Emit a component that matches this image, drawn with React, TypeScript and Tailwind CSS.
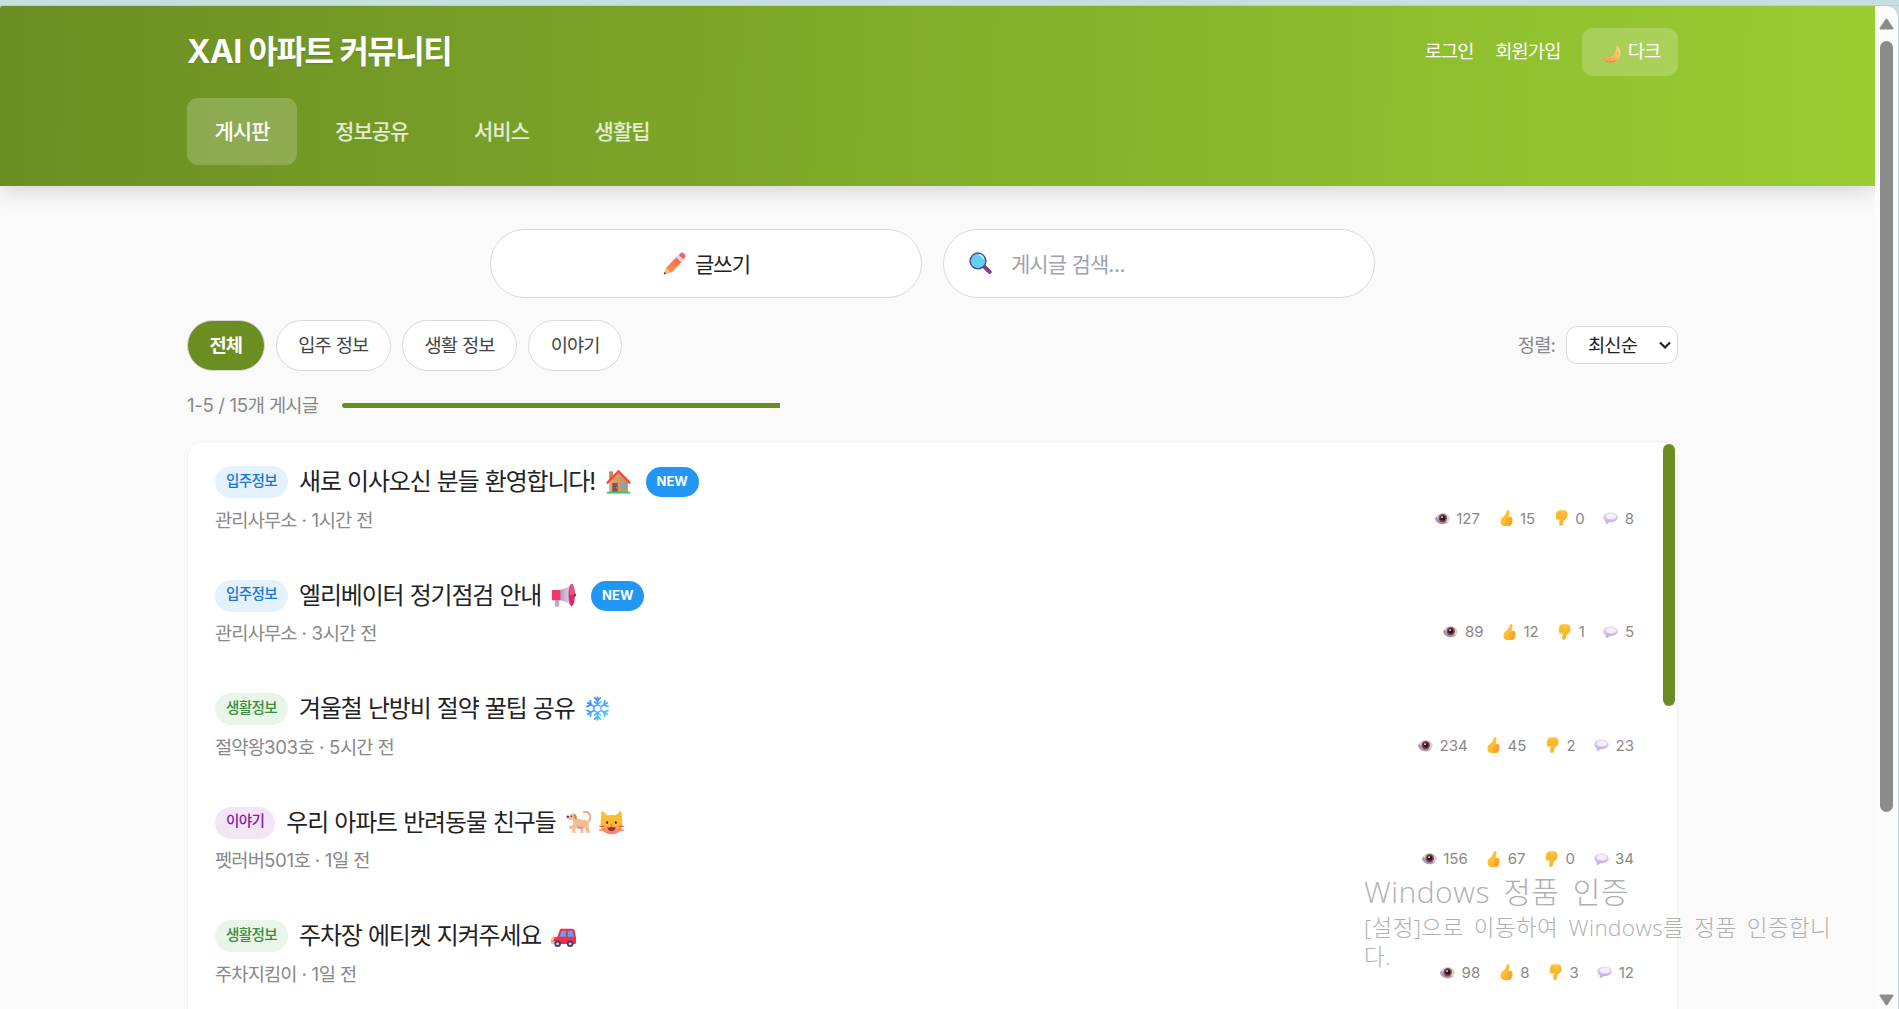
import type { ReactNode } from "react";

type IconProps = { className?: string };

function Svg({ className, viewBox = "0 0 32 32", children }: { className?: string; viewBox?: string; children: ReactNode }) {
  return (
    <svg viewBox={viewBox} className={className} fill="none" preserveAspectRatio="none" aria-hidden="true">
      {children}
    </svg>
  );
}

function Gradients() {
  return (
    <svg className="h-0 w-0 shrink-0" aria-hidden="true">
      <defs>
        <linearGradient id="thumb" x1="0" y1="0" x2="1" y2="1">
          <stop offset="0" stopColor="#ffd640" />
          <stop offset="1" stopColor="#f8a224" />
        </linearGradient>
        <linearGradient id="moon" x1="1" y1="0" x2="0" y2="1">
          <stop offset="0" stopColor="#ffd77a" />
          <stop offset="1" stopColor="#ff9c4a" />
        </linearGradient>
        <linearGradient id="pencil" x1="1" y1="0" x2="0" y2="1">
          <stop offset="0" stopColor="#f4604e" />
          <stop offset="1" stopColor="#ff9a3c" />
        </linearGradient>
        <linearGradient id="bubble" x1="0" y1="0" x2="0" y2="1">
          <stop offset="0" stopColor="#e9e1f3" />
          <stop offset="1" stopColor="#c0a9e0" />
        </linearGradient>
        <linearGradient id="horn" x1="0" y1="0" x2="1" y2="0">
          <stop offset="0" stopColor="#a79fc0" />
          <stop offset="1" stopColor="#dcd6e6" />
        </linearGradient>
        <linearGradient id="snow" x1="0" y1="0" x2="1" y2="1">
          <stop offset="0" stopColor="#3f86f2" />
          <stop offset="1" stopColor="#4fd0fb" />
        </linearGradient>
        <linearGradient id="cat" x1="0" y1="0" x2="0" y2="1">
          <stop offset="0" stopColor="#ffc330" />
          <stop offset="0.6" stopColor="#ffb53c" />
          <stop offset="1" stopColor="#ff6f70" />
        </linearGradient>
        <linearGradient id="wall" x1="0" y1="0" x2="1" y2="0">
          <stop offset="0" stopColor="#e3a878" />
          <stop offset="1" stopColor="#c98a5c" />
        </linearGradient>
      </defs>
    </svg>
  );
}

const Moon = ({ className }: IconProps) => (
  <Svg className={className}>
    <path d="M24 0c7 5 9.500 15 5 22.500C23.500 31.500 11 34 3 27.500 1 26 0 24 0 22c8 2.500 17-.5 21-8 2.700-5 3.500-9.500 3-14Z" fill="url(#moon)" />
    <path d="M2 26.500c.8 1.300 1.700 2.200 3 2.800 7 3.500 16 1.500 21-4-6 3.500-16 5.500-24 1.200Z" fill="#e87a5c" />
    <circle cx="12" cy="25" r="1.500" fill="#ee8a4c" />
    <circle cx="26" cy="14" r="1.500" fill="#f3ac55" />
  </Svg>
);

const Pencil = ({ className }: IconProps) => (
  <Svg className={className}>
    <path d="M5 21 20 6l7 7-15 15-10 3Z" fill="url(#pencil)" />
    <path d="m18.500 7.500 4-4 7 7-4 4Z" fill="#dcd9ee" />
    <path d="m22 4 2.500-2.500c1-1 3-1 4 0l2 2c1 1 1 3 0 4L28 10Z" fill="#ff5d5a" />
    <path d="m4.500 21.500-3.500 9c2 1 5 0 9-2Z" fill="#f0b9a0" />
    <path d="M1.800 27.500 1 30.500c1 .6 2.500.3 3.600-.3Z" fill="#50415a" />
  </Svg>
);

const Magnifier = ({ className }: IconProps) => (
  <Svg className={className}>
    <path d="m20 20 3-2 8 8c1 1 .8 2.500-.3 3.800-1.200 1.200-2.800 1.200-3.800.2l-8-8Z" fill="#7d4484" />
    <circle cx="12.500" cy="12.500" r="11" fill="#62d0f0" stroke="#53479c" strokeWidth="2" />
    <path d="M15 4.500c2.500.5 4.300 2.200 5 4.500" stroke="#b5f2ff" strokeWidth="2.500" strokeLinecap="round" />
  </Svg>
);

const House = ({ className }: IconProps) => (
  <Svg className={className}>
    <path d="M4 3h5v12H4Z" fill="#c8875c" />
    <path d="M16 4 28 17v13H4V17Z" fill="url(#wall)" />
    <path d="M8 18h7v12H8Z" fill="#86504f" />
    <circle cx="13.300" cy="24" r=".8" fill="#f2c28f" />
    <path d="M19 18h6.500v6.500H19Z" fill="#4bb6ef" />
    <path d="M2 17.500 16 3l14 14.500" stroke="#ee4b43" strokeWidth="3" strokeLinecap="round" strokeLinejoin="round" />
    <path d="M1 29h30v2.500H1Z" fill="#34cf6c" />
  </Svg>
);

const Megaphone = ({ className }: IconProps) => (
  <Svg className={className}>
    <path d="M5 20h5.500v10.500H7c-1.200 0-2-.8-2-2Z" fill="#b8aec9" />
    <path d="M11 9C17 8 22 5 25 2v27c-3-4-8-6-14-7Z" fill="url(#horn)" />
    <path d="M1 11c0-1.300.7-2 2-2h9v13H3c-1.300 0-2-.7-2-2Z" fill="#f0386a" />
    <ellipse cx="26.500" cy="15.500" rx="4" ry="14.500" fill="#e3275f" />
    <path d="M26 1c3 2 4 8 4 14h-6C24 8 25 3 26 1Z" fill="#f9507c" />
    <path d="M29.500 13c2 0 2.500 1.200 2.500 2.500s-.5 2.500-2.500 2.500Z" fill="#6e3350" />
  </Svg>
);

const Snowflake = ({ className }: IconProps) => (
  <Svg className={className}>
    <g stroke="url(#snow)" strokeWidth="2.300" strokeLinecap="round" strokeLinejoin="round">
      <path d="M16 1.500v8M16 22.500v8M12.500 2.500 16 6.500l3.500-4M12.500 29.500l3.500-4 3.500 4" />
      <path d="m3.400 8.800 7 4M21.600 19.200l7 4M2.500 13.500l5.200-2-1-5.400M29.500 18.500l-5.200 2 1 5.400" />
      <path d="m28.600 8.800-7 4M10.400 19.200l-7 4M29.500 13.500l-5.200-2 1-5.400M2.500 18.500l5.200 2-1 5.400" />
      <path d="m16 11 4.500 2.600v5L16 21.200l-4.500-2.600v-5ZM12 7.500l4 3 4-3M12 24.500l4-3 4 3" strokeWidth="1.800" />
    </g>
  </Svg>
);

const Dog = ({ className }: IconProps) => (
  <Svg className={className}>
    <path d="M26 16c4-1 5.500-4 5-8-.5-4.500-5-7-8-5" stroke="#e9ac84" strokeWidth="2.500" strokeLinecap="round" />
    <path d="M5 7C6 4.500 9 4 11.500 5c2 1 2 3.500 2.500 6 3 2 9 1 12.500 2.500 3 1.500 3 5 2.500 8l1.500 8h-4L24 23l-2 1 .5 5.500H19L18 23h-4l-3 2 1.500 4.500H9L7 24H4v-3l5-2V13c-2 0-5 0-7-2-2-1.500-1-3 0-3Z" fill="#f3bd96" />
    <path d="M14 21h8l-.5 3H15Z" fill="#ef8e91" />
    <path d="M10 5c3 0 4.500 4 3 7-2-1-3-3-3-7Z" fill="#c98460" />
    <circle cx="2.200" cy="8.500" r="1.500" fill="#473741" />
    <circle cx="7" cy="8" r="1" fill="#473741" />
  </Svg>
);

const Cat = ({ className }: IconProps) => (
  <Svg className={className}>
    <path d="M3 3c0-1.500 1.500-2 2.500-1L11 7c3-.7 7-.7 10 0l5.500-5c1-1 2.500-.5 2.500 1l1 15c.5 8-6 13-14 13S1.500 26 2 18Z" fill="url(#cat)" />
    <path d="M1 21h5M1 26l5-1M31 21h-5M31 26l-5-1" stroke="#ef624d" strokeWidth="1.500" strokeLinecap="round" />
    <ellipse cx="10.500" cy="16" rx="1.300" ry="2" fill="#46313f" />
    <ellipse cx="21.500" cy="16" rx="1.300" ry="2" fill="#46313f" />
    <path d="M14.500 18.500h3L16 20Z" fill="#f0377c" />
    <path d="M10.500 22c2 .7 4 .5 5.500-1 1.500 1.500 3.500 1.700 5.500 1-.3 3-2.500 5-5.500 5s-5.200-2-5.500-5Z" fill="#9b2b44" />
  </Svg>
);

const Car = ({ className }: IconProps) => (
  <Svg className={className}>
    <path d="M8 18 11 9.500C11.500 8 12.500 7.500 14 7.500h13c2 0 3 1 3.500 3L32 19v6c0 1.500-1 2-2 2H3c-1.500 0-2.500-1-2.500-2.500V21C1 19 3 18 8 18Z" fill="#ec2f4f" />
    <path d="M11 17.500 13.300 11c.2-.8.700-1 1.500-1H19v7.500ZM21.500 10H26c1 0 1.500.4 1.700 1.300l1.300 6.200h-7.500Z" fill="#5aa8f5" />
    <path d="M1 19.500h3.500L3 22.500H.5Z" fill="#ffe071" />
    <path d="M.5 23.500h7V27H3c-1.500 0-2.500-1-2.500-2.500Z" fill="#cfbedb" />
    <circle cx="8.500" cy="26.500" r="4.200" fill="#4a3760" />
    <circle cx="24.500" cy="26.500" r="4.200" fill="#4a3760" />
    <circle cx="8.500" cy="26.500" r="2" fill="#cdbcec" />
    <circle cx="24.500" cy="26.500" r="2" fill="#cdbcec" />
  </Svg>
);

const Eye = ({ className }: IconProps) => (
  <Svg className={className}>
    <path d="M0 17C3 9 9 4.500 17 4.500c6 0 12 4 15 11.500-3 8-8 12.500-15.500 12.500S3 25 0 17Z" fill="#d5d1dd" />
    <path d="M0 17c3 7.500 9 11.500 16.500 11.500 5 0 9-2.500 12-6-8 3-18 1-25.500-10.500Z" fill="#ac95c4" />
    <circle cx="16.500" cy="15.500" r="9" fill="#8a4742" />
    <circle cx="16.500" cy="15" r="5.500" fill="#2c1423" />
    <circle cx="15" cy="13" r="2" fill="#fff" />
  </Svg>
);

const ThumbUp = ({ className }: IconProps) => (
  <Svg className={className} viewBox="2 0 29 32">
    <path d="M20 0c3 0 4 3 3 7l-2 6.500h4c4 0 5.500 2.500 4.500 4.500 1.200 1.500 1 3.500-.2 4.700.7 1.800 0 3.500-1.300 4.300 0 3-2 5-5 5H12c-6 0-9-3.500-9-9 0-4 2-6.500 5-8.500 4-2.500 6.500-5.500 8-10.500.7-2.500 2-4 4-4Z" fill="url(#thumb)" />
    <path d="M19 18h9M19 22.500h9M19 27h7.500" stroke="#e58a22" strokeWidth="1" strokeLinecap="round" />
  </Svg>
);

const ThumbDown = ({ className }: IconProps) => (
  <Svg className={className} viewBox="1 0 29 32">
    <path d="M14 32c-3 0-4-3-3.500-7l1-5.500H7c-4 0-5-3-4-5-1.200-1.500-1-3.500.2-4.700C2.500 8 3.200 6.300 4.500 5.500c0-3 2-5 5-5H20c6 0 9 4 9 9.500 0 4-1.500 6.500-4.500 8.500s-5.500 4.500-6 9.500c-.3 2.500-2 4-4.500 4Z" fill="url(#thumb)" />
    <path d="M4 14.500h9M4 10h9M5.500 5.500H13" stroke="#e58a22" strokeWidth="1" strokeLinecap="round" />
  </Svg>
);

const Bubble = ({ className }: IconProps) => (
  <Svg className={className}>
    <path d="M16 3.500c9 0 15.500 4.500 15.500 11S25 25.500 16 25.500h-3C11 28 8.500 29.500 6 29c-1-.2-1-1-.6-1.700.6-1 .9-2 .6-3.300C2.500 21.500.5 18.500.5 14.500.5 8 7 3.500 16 3.500Z" fill="url(#bubble)" />
    <ellipse cx="17" cy="12.500" rx="11" ry="6.500" fill="#f3eef7" />
  </Svg>
);

/** Sets Hangul runs in the Korean face with tight tracking; everything else in Inter. */
function T({ children }: { children: string }) {
  const runs = children.split(/([가-힣]+)/).filter(Boolean);
  return (
    <span className="whitespace-pre font-['Inter','Noto_Sans_CJK_KR',sans-serif]">
      {runs.map((run, i) =>
        /[가-힣]/.test(run) ? (
          <span key={i} className="font-['Noto_Sans_CJK_KR',sans-serif] tracking-[-0.046em]">{run}</span>
        ) : (
          <span key={i} className="tracking-[-0.02em]">{run}</span>
        ),
      )}
    </span>
  );
}

const tagStyles: Record<string, string> = {
  입주정보: "bg-[#e3f2fd] text-[#1976d2]",
  생활정보: "bg-[#e8f5e9] text-[#388e3c]",
  이야기: "bg-[#f3e5f5] text-[#7b1fa2]",
};

const posts = [
  { tag: "입주정보", title: "새로 이사오신 분들 환영합니다!", icons: [House], isNew: true, meta: "관리사무소 · 1시간 전", stats: [127, 15, 0, 8] },
  { tag: "입주정보", title: "엘리베이터 정기점검 안내", icons: [Megaphone], isNew: true, meta: "관리사무소 · 3시간 전", stats: [89, 12, 1, 5] },
  { tag: "생활정보", title: "겨울철 난방비 절약 꿀팁 공유", icons: [Snowflake], isNew: false, meta: "절약왕303호 · 5시간 전", stats: [234, 45, 2, 23] },
  { tag: "이야기", title: "우리 아파트 반려동물 친구들", icons: [Dog, Cat], isNew: false, meta: "펫러버501호 · 1일 전", stats: [156, 67, 0, 34] },
  { tag: "생활정보", title: "주차장 에티켓 지켜주세요", icons: [Car], isNew: false, meta: "주차지킴이 · 1일 전", stats: [98, 8, 3, 12] },
];

const statIcons = [
  { Icon: Eye, size: "h-[15px] w-[15px]" },
  { Icon: ThumbUp, size: "mx-px h-4 w-[13px]" },
  { Icon: ThumbDown, size: "mx-px h-4 w-[13px]" },
  { Icon: Bubble, size: "h-[14px] w-[15px]" },
];
const navItems = ["게시판", "정보공유", "서비스", "생활팁"];
const filters = ["전체", "입주 정보", "생활 정보", "이야기"];

function Header() {
  return (
    <header className="relative h-[180px] shrink-0 bg-[linear-gradient(92deg,#6b8e23_0%,#9acd32_100%)] text-white shadow-[0_4px_22px_rgba(0,0,0,0.17)]">
      <div className="ml-[187px] w-[1491px] pt-[22px]">
        <div className="flex h-12 items-center justify-between">
          <h1 className="pb-1 text-[32px] font-bold leading-none [text-shadow:0_1px_2px_rgba(0,0,0,0.15)]"><T>XAI 아파트 커뮤니티</T></h1>
          <div className="flex items-center gap-[21.500px] text-[18.700px] leading-none">
            <a className="pb-[2px]"><T>로그인</T></a>
            <a className="pb-[2px]"><T>회원가입</T></a>
            <button className="flex h-12 w-24 items-center justify-center gap-[7px] rounded-[11px] bg-white/20 pb-px pl-[3px]">
              <Moon className="mt-1 size-[18px]" />
              <T>다크</T>
            </button>
          </div>
        </div>
        <nav className="mt-[22px] flex gap-[10.500px] text-[21px] font-medium leading-none">
          {navItems.map((item, i) => (
            <a key={item} className={i === 0 ? "flex h-[67px] items-center rounded-[11px] bg-white/20 px-[27.500px] pb-[2px]" : "flex h-[67px] items-center px-[27.500px] pb-[2px] text-white/80"}>
              <T>{item}</T>
            </a>
          ))}
        </nav>
      </div>
    </header>
  );
}

function PostRow({ post }: { post: (typeof posts)[number] }) {
  return (
    <li className="h-[113.500px] pl-[27px] pr-[43px] pt-6">
      <div className="flex h-8 items-center">
        <span className={`flex h-8 items-center rounded-full px-[11px] pb-[3px] text-[14.600px] font-medium leading-none ${tagStyles[post.tag]}`}>
          <T>{post.tag}</T>
        </span>
        <h2 className="ml-[11px] pb-[2px] text-[23.900px] font-normal leading-none text-[#222]"><T>{post.title}</T></h2>
        <span className="ml-[10px] flex gap-[8px] pb-px">
          {post.icons.map((Icon, i) => <Icon key={i} className="size-[25px]" />)}
        </span>
        {post.isNew && (
          <span className="ml-[15px] flex h-[30px] w-[53px] items-center justify-center rounded-full bg-[#2196f3] pb-px font-['Inter'] text-[13px] font-bold leading-none text-white">NEW</span>
        )}
      </div>
      <div className="mt-2 flex h-7 items-center justify-between leading-none text-[#888]">
        <p className="text-[18.700px]"><T>{post.meta}</T></p>
        <div className="flex items-center gap-[18.500px] pb-1 font-['Inter'] text-[15px]">
          {post.stats.map((value, i) => {
            const { Icon, size } = statIcons[i];
            return (
              <span key={i} className="flex items-center gap-[6.500px]">
                <Icon className={size} />
                <span>{value}</span>
              </span>
            );
          })}
        </div>
      </div>
    </li>
  );
}

function Scrollbar() {
  return (
    <div className="flex w-6 shrink-0 flex-col items-center rounded-tr-[12px] border-r border-[#b9d4d8] bg-[#fcfcfc] pt-[12px] pb-[3px]">
      <svg viewBox="0 0 15 12" className="h-3 w-[15px]"><path d="M7.500 1.500 13.500 10.500H1.500Z" fill="#8b8b8b" stroke="#8b8b8b" strokeWidth="2" strokeLinejoin="round" /></svg>
      <div className="mt-[11px] h-[771px] w-[13px] rounded-full bg-[#8b8b8b]" />
      <svg viewBox="0 0 15 12" className="mt-auto h-3 w-[15px]"><path d="M7.500 10.500 13.500 1.500H1.500Z" fill="#8b8b8b" stroke="#8b8b8b" strokeWidth="2" strokeLinejoin="round" /></svg>
    </div>
  );
}

export default function App() {
  return (
    <div className="relative flex h-[1009px] w-[1899px] flex-col overflow-hidden bg-[#c8dfe2] font-['Inter','Noto_Sans_CJK_KR',sans-serif]">
      <div className="h-1.5 shrink-0 shadow-[inset_0_-1px_0_#b5cfd2]" />
      <div className="flex min-h-0 flex-1">
        <div className="flex w-[1875px] shrink-0 flex-col overflow-hidden rounded-tl-[2px] bg-[#fafafa]">
          <Header />
          <main className="ml-[187px] w-[1491px] pt-[43px]">
            <div className="flex justify-center gap-[21px]">
              <button className="flex h-[69px] w-[432px] items-center justify-center gap-[9px] rounded-full border border-[#d9d9d9] bg-white pl-px text-[21px] leading-none text-[#222]">
                <Pencil className="size-[23px]" />
                <T>글쓰기</T>
              </button>
              <div className="flex h-[69px] w-[432px] items-center gap-[19px] rounded-full border border-[#d9d9d9] bg-white pl-[25px] text-[21px] leading-none text-[#9ca3af]">
                <Magnifier className="size-[23px]" />
                <T>게시글 검색...</T>
              </div>
            </div>

            <div className="mt-[22px] flex items-center justify-between text-[18.700px] leading-none">
              <div className="flex gap-[11px]">
                {filters.map((label, i) => (
                  <button
                    key={label}
                    className={i === 0
                      ? "flex h-[51px] items-center rounded-full border border-[#d9d9d9] bg-[#6b8e23] px-[21.500px] font-bold text-white"
                      : "flex h-[51px] items-center rounded-full border border-[#d9d9d9] bg-white px-[21.500px] text-[#444]"}
                  >
                    <T>{label}</T>
                  </button>
                ))}
              </div>
              <div className="flex items-center gap-[10.500px] pb-px text-[#888]">
                <T>정렬:</T>
                <div className="flex h-[38px] w-28 items-center justify-between rounded-[11px] border border-[#d9d9d9] bg-white pl-[21px] pr-[5px] text-[#222]">
                  <T>최신순</T>
                  <svg viewBox="0 0 14 10" className="h-[10px] w-[14px]" fill="none"><path d="m2 2.500 5 5 5-5" stroke="#222" strokeWidth="2.200" /></svg>
                </div>
              </div>
            </div>

            <div className="mt-5 flex h-7 items-center gap-[21px] text-[18.700px] leading-none text-[#888]">
              <div className="w-[134px]"><T>1-5 / 15개 게시글</T></div>
              <div className="h-[5px] w-[1314px] overflow-hidden rounded-full bg-[#f8fafc]">
                <div className="h-full w-1/3 bg-[#6b8e23]" />
              </div>
            </div>

            <section className="mt-[22px] flex h-[640px] justify-between rounded-2xl border border-[#f2f2f3] bg-white">
              <ul className="min-w-0 flex-1">
                {posts.map((post) => <PostRow key={post.title} post={post} />)}
              </ul>
              <div className="-ml-[14px] mr-[2px] mt-[2px] h-[262px] w-3 rounded-full bg-[#6b8e23]" />
            </section>
          </main>
        </div>
        <Scrollbar />
      </div>

      <div className="absolute left-[1364px] top-[871px] w-[490px] font-['Open_Sans','Noto_Sans_CJK_KR',sans-serif] font-light text-[#b0b0b0]">
        <p className="whitespace-nowrap text-[30px] leading-[42px] tracking-[0.5px] [word-spacing:5px]">Windows 정품 인증</p>
        <p className="whitespace-nowrap text-[22.500px] leading-[29px] tracking-[0.4px] [word-spacing:4px]">[설정]으로 이동하여 Windows를 정품 인증합니<br />다.</p>
      </div>
      <Gradients />
    </div>
  );
}
